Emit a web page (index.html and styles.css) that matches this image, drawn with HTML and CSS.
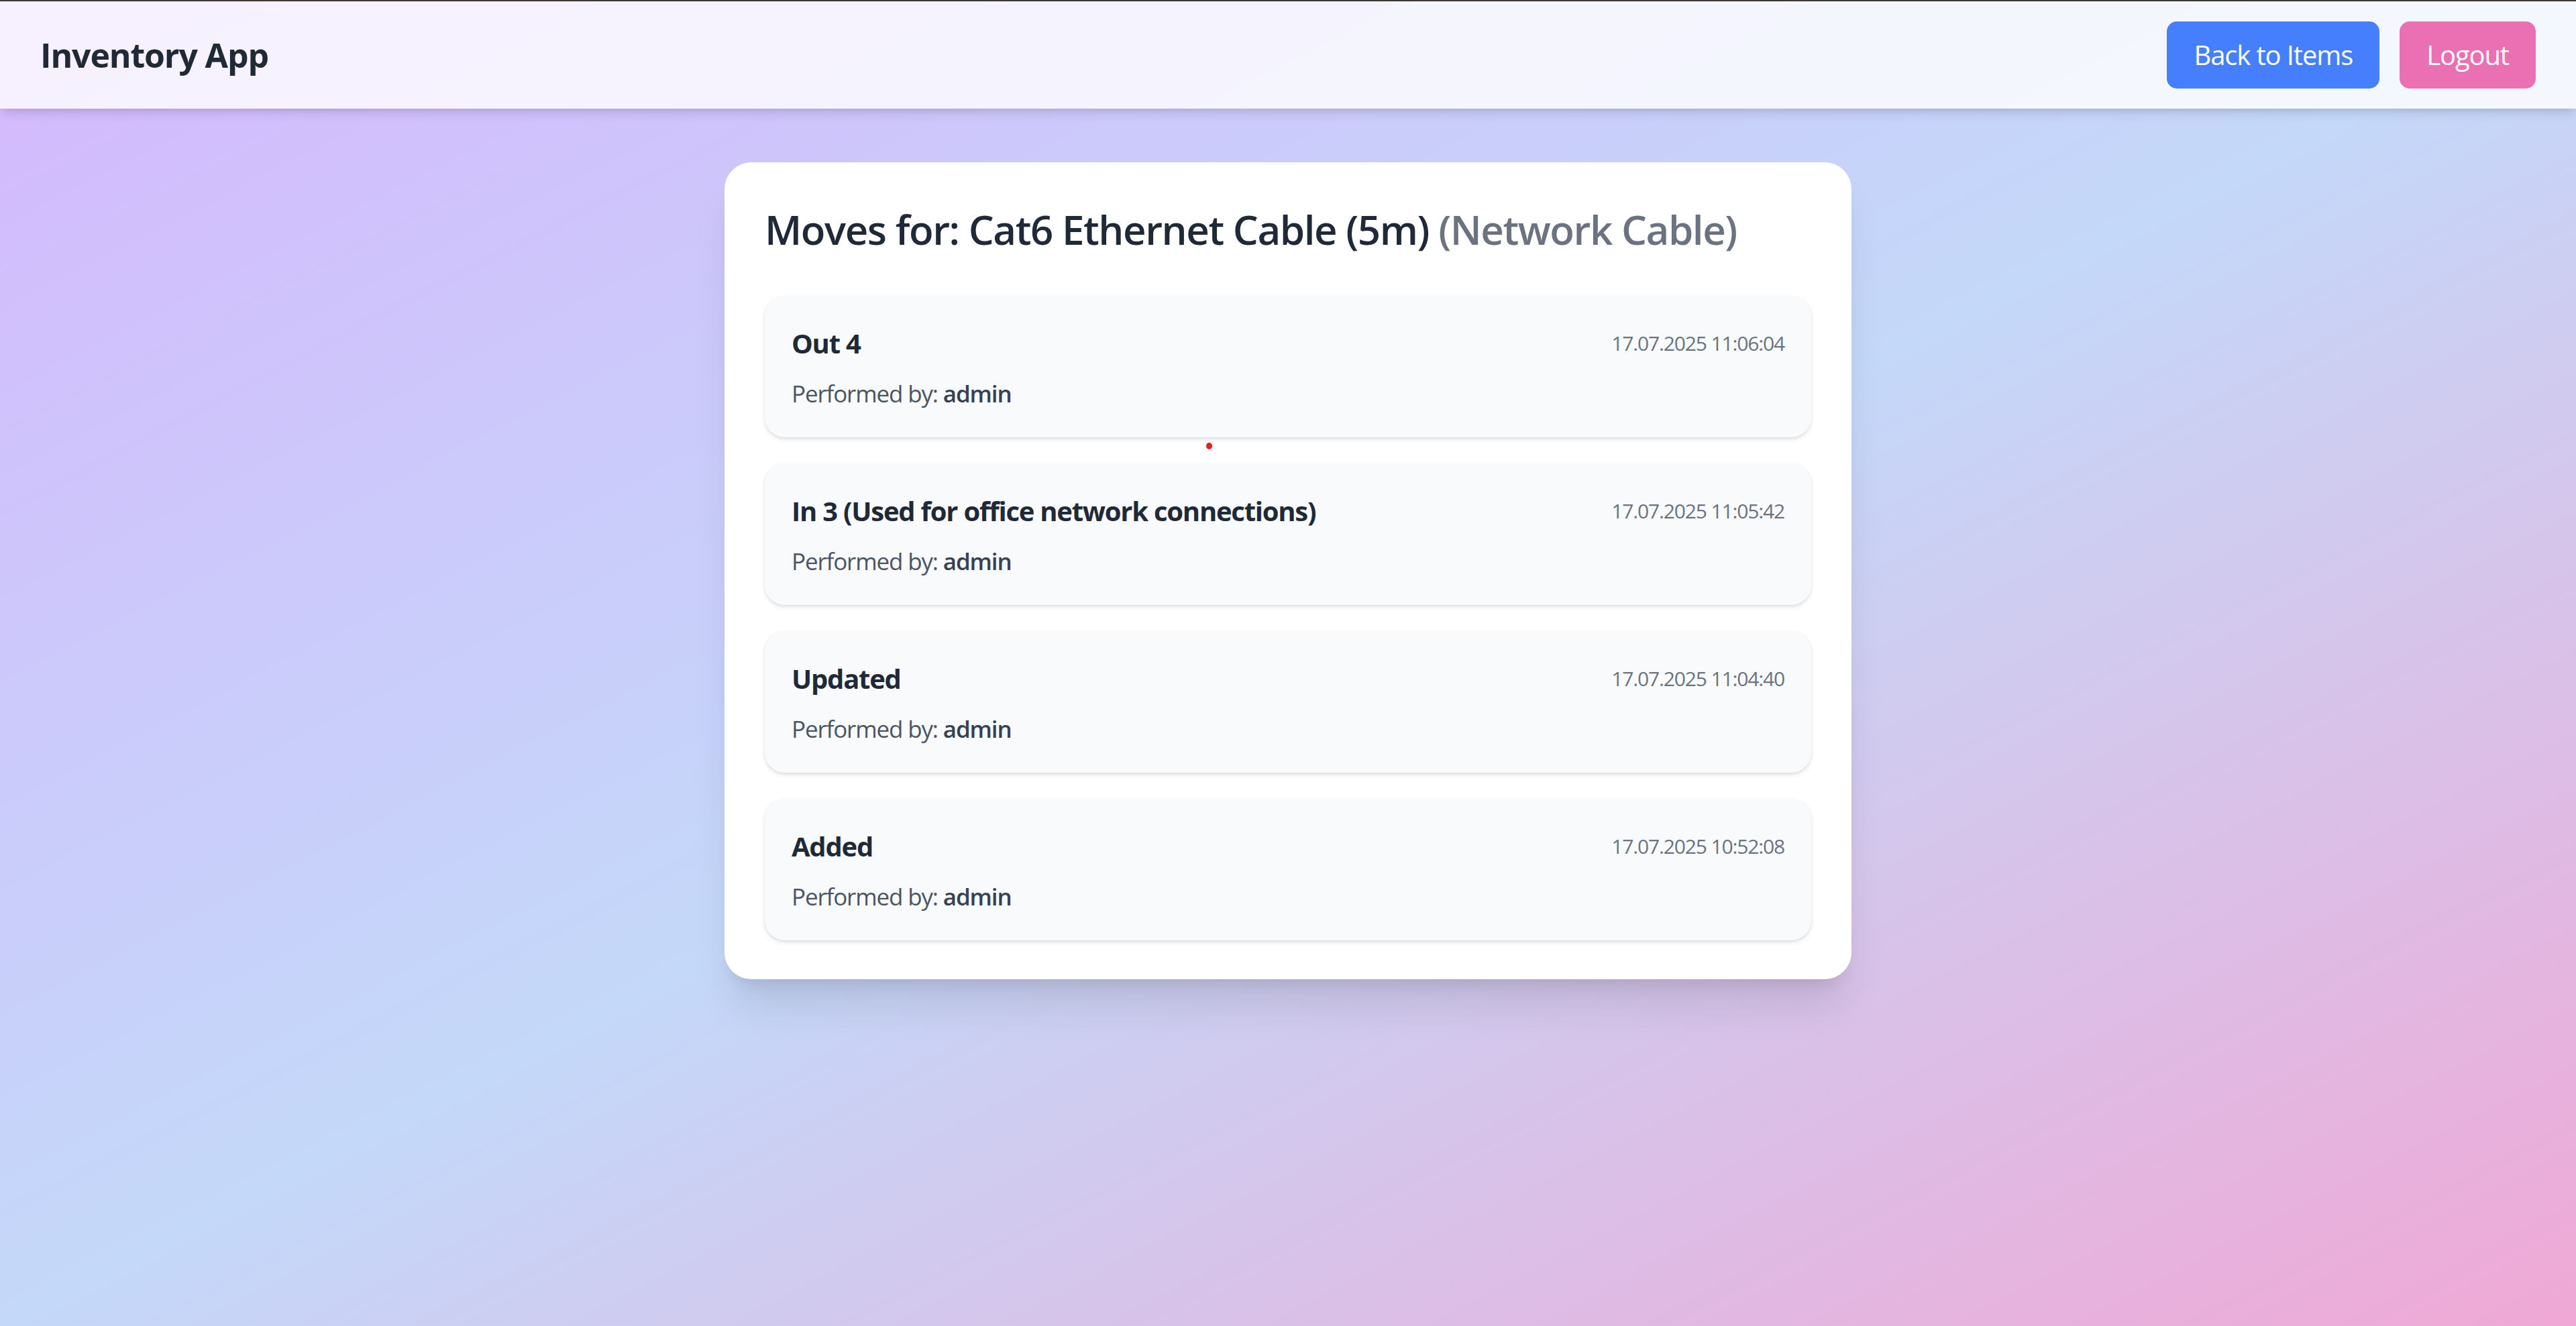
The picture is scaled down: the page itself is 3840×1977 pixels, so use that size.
FILE: index.html
```html
<!DOCTYPE html>
<html lang="en">
<head>
<meta charset="utf-8">
<title>Inventory App</title>
<link rel="stylesheet" href="styles.css">
</head>
<body>
  <header class="topbar">
    <div class="brand">Inventory App</div>
    <nav class="actions">
      <button class="btn btn-blue">Back to Items</button>
      <button class="btn btn-pink">Logout</button>
    </nav>
  </header>
  <main class="page">
    <section class="card">
      <h2 class="card-title">Moves for: Cat6 Ethernet Cable (5m) <span class="muted">(Network Cable)</span></h2>
      <ul class="moves">
        <li class="move">
          <div class="move-row"><span class="move-name">Out 4</span><span class="move-time">17.07.2025 11:06:04</span></div>
          <div class="move-by">Performed by: <span class="user">admin</span></div>
        </li>
        <li class="move">
          <div class="move-row"><span class="move-name">In 3 (Used for office network connections)</span><span class="move-time">17.07.2025 11:05:42</span></div>
          <div class="move-by">Performed by: <span class="user">admin</span></div>
        </li>
        <li class="move">
          <div class="move-row"><span class="move-name">Updated</span><span class="move-time">17.07.2025 11:04:40</span></div>
          <div class="move-by">Performed by: <span class="user">admin</span></div>
        </li>
        <li class="move">
          <div class="move-row"><span class="move-name">Added</span><span class="move-time">17.07.2025 10:52:08</span></div>
          <div class="move-by">Performed by: <span class="user">admin</span></div>
        </li>
      </ul>
    </section>
  </main>
  <div class="cursor-dot"></div>
</body>
</html>
```
FILE: styles.css
```css
* { box-sizing: border-box; }
html, body { margin: 0; padding: 0; }
body {
  min-height: 1977px;
  border-top: 2px solid #3d3932;
  font-family: "Open Sans", "Noto Sans", "Liberation Sans", sans-serif;
  letter-spacing: -0.025em;
  background: linear-gradient(to bottom right, #d5b8fd 0%, #c4d8f9 50%, #f0a8d6 100%);
  position: relative;
}
.topbar {
  display: flex;
  justify-content: space-between;
  align-items: center;
  padding: 30px 60px;
  background: rgba(255,255,255,0.8);
  box-shadow: 0 10px 15px -2.5px rgba(0,0,0,0.1), 0 5px 10px -5px rgba(0,0,0,0.1);
  position: relative;
}
.brand {
  font-size: 50px;
  line-height: 70px;
  font-weight: 700;
  color: #1f2937;
  letter-spacing: -0.023em;
}
.actions { display: flex; gap: 30px; }
.btn {
  font-family: inherit;
  font-size: 40px;
  line-height: 60px;
  letter-spacing: -0.028em;
  padding: 20px 40px;
  border: 0;
  border-radius: 15px;
  color: #fff;
}
.btn-blue { background: #467ffd; }
.btn-pink { background: #ea70b3; }
.page { padding-top: 80px; }
.card {
  width: 1680px;
  margin: 0 auto;
  background: #fff;
  border-radius: 40px;
  padding: 60px 60px 58px;
  box-shadow: 0 50px 62px -12px rgba(0,0,0,0.1), 0 20px 25px -15px rgba(0,0,0,0.1);
}
.card-title {
  margin: 0 0 60px;
  font-size: 60px;
  line-height: 80px;
  font-weight: 600;
  color: #1f2937;
  letter-spacing: -0.024em;
}
.muted { color: #6b7280; }
.moves {
  list-style: none;
  margin: 0;
  padding: 0;
  display: flex;
  flex-direction: column;
  gap: 40px;
}
.move {
  background: #f9fafb;
  border-radius: 30px;
  padding: 40px;
  box-shadow: 0 2.5px 7.5px rgba(0,0,0,0.1), 0 2.5px 5px -2.5px rgba(0,0,0,0.1);
}
.move-row {
  display: flex;
  justify-content: space-between;
  align-items: center;
}
.move-name {
  font-size: 40px;
  line-height: 60px;
  font-weight: 700;
  color: #1f2937;
  letter-spacing: -0.031em;
}
.move-time {
  font-size: 30px;
  line-height: 40px;
  color: #6b7280;
  letter-spacing: -0.038em;
}
.move-by {
  margin-top: 20px;
  font-size: 35px;
  line-height: 50px;
  color: #4b5563;
  letter-spacing: -0.033em;
}
.user { font-weight: 600; color: #374151; }
.cursor-dot {
  position: absolute;
  left: 1798px;
  top: 658px;
  width: 9px;
  height: 10px;
  border-radius: 50%;
  background: #ee1c1c;
}
```
